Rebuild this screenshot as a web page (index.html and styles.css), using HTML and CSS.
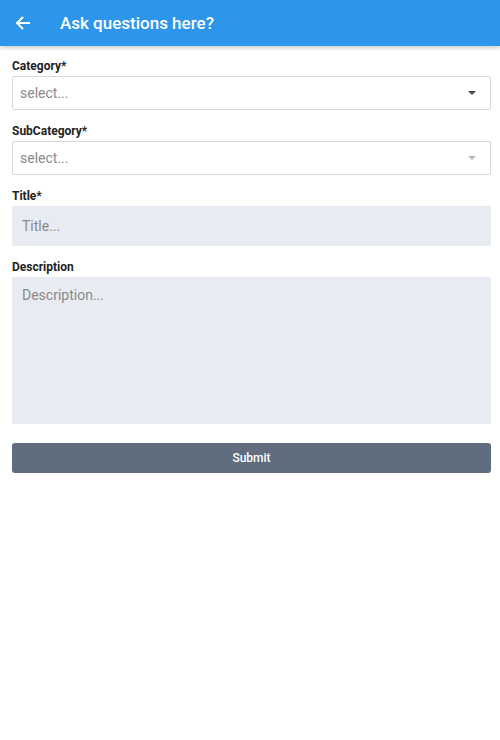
FILE: index.html
```html
<!DOCTYPE html>
<html lang="en">
<head>
  <meta charset="UTF-8">
  <meta name="viewport" content="width=device-width, initial-scale=1.0">
  <title>Ask questions here?</title>
  <link rel="stylesheet" href="styles.css">
</head>
<body>
  <!-- top bar -->
  <header class="appbar">
    <button class="back" aria-label="Back">
      <svg width="16" height="16" viewBox="0 0 16 16">
        <path d="M15 8H2M8 2L2 8l6 6" fill="none" stroke="#fff" stroke-width="2"/>
      </svg>
    </button>
    <h1 class="appbar-title">Ask questions here?</h1>
  </header>

  <!-- form -->
  <form class="form">
    <div class="field">
      <label class="label">Category*</label>
      <div class="select">
        <span class="placeholder">select...</span>
        <span class="caret"></span>
      </div>
    </div>

    <div class="field">
      <label class="label">SubCategory*</label>
      <div class="select">
        <span class="placeholder">select...</span>
        <span class="caret caret-light"></span>
      </div>
    </div>

    <div class="field">
      <label class="label">Title*</label>
      <input class="input" type="text" placeholder="Title...">
    </div>

    <div class="field">
      <label class="label">Description</label>
      <textarea class="input textarea" placeholder="Description..."></textarea>
    </div>

    <button type="button" class="submit">Submit</button>
  </form>
</body>
</html>
```

FILE: styles.css
```css
body {
  margin: 0;
  background: #fff;
  font-family: Roboto, 'Liberation Sans', sans-serif;
  color: #222;
}

/* top bar */
.appbar {
  height: 46px;
  background-color: #2d96eb;
  display: flex;
  align-items: center;
  box-shadow: 0 2px 4px rgba(0, 0, 0, 0.2);
}

.back {
  width: 46px;
  height: 46px;
  padding: 0 0 0 15px;
  display: flex;
  align-items: center;
  background: none;
  border: none;
}

.appbar-title {
  margin: 0 0 0 14px;
  font-size: 17px;
  font-weight: 500;
  color: #fff;
}

/* form */
.form {
  padding: 13px 9px 0 12px;
}

.field {
  margin-bottom: 14px;
}

.label {
  display: block;
  font-size: 12px;
  font-weight: bold;
  color: #222;
  line-height: 14px;
  margin-bottom: 3px;
}

.select {
  height: 32px;
  border: 1px solid #d4d6e2;
  border-radius: 2px;
  display: flex;
  align-items: center;
  justify-content: space-between;
  padding: 0 14px 0 7px;
}

.placeholder {
  font-size: 14px;
  color: #8a8a8a;
}

.caret {
  width: 0;
  height: 0;
  border-left: 4px solid transparent;
  border-right: 4px solid transparent;
  border-top: 4px solid #444;
}

.caret-light {
  border-top-color: #bbb;
}

.input {
  display: block;
  box-sizing: border-box;
  width: 100%;
  height: 40px;
  border: none;
  border-radius: 0;
  background-color: #e9ebf2;
  padding: 0 10px;
  font-family: Roboto, 'Liberation Sans', sans-serif;
  font-size: 14px;
  color: #333;
  outline: none;
}

.input::placeholder {
  color: #8a8a8a;
}

.textarea {
  height: 147px;
  padding: 10px 10px;
  resize: none;
}

.submit {
  display: block;
  width: 100%;
  height: 30px;
  margin-top: 19px;
  border: none;
  border-radius: 3px;
  background-color: #5f6d7f;
  color: #fff;
  font-family: Roboto, 'Liberation Sans', sans-serif;
  font-size: 12px;
  font-weight: 500;
}
```
